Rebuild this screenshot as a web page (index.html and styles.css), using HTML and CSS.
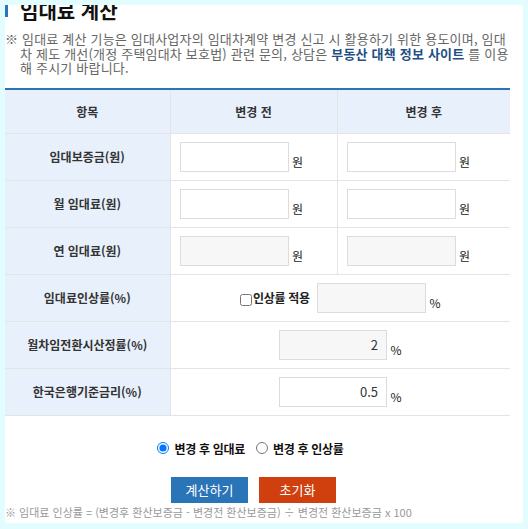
FILE: index.html
```html
<!DOCTYPE html>
<html lang="ko">
<head>
    <meta charset="UTF-8">
    <meta name="viewport" content="width=device-width, initial-scale=1.0">
    <title>임대료 계산</title>
    <link rel="stylesheet" href="styles.css">
</head>
<body>
    <div class="panel">
        <div class="content">
            <!-- 제목 -->
            <h3 class="page-title"><span class="title-bar"></span>임대료 계산</h3>
            <p class="notice">※ 임대료 계산 기능은 임대사업자의 임대차계약 변경 신고 시 활용하기 위한 용도이며, 임대차 제도 개선(개정 주택임대차 보호법) 관련 문의, 상담은 <a class="notice-link" href="#">부동산 대책 정보 사이트</a> 를 이용해 주시기 바랍니다.</p>

            <!-- 계산 표 -->
            <table class="calc-table">
                <colgroup>
                    <col class="col-label">
                    <col class="col-before">
                    <col class="col-after">
                </colgroup>
                <thead>
                    <tr>
                        <th>항목</th>
                        <th>변경 전</th>
                        <th>변경 후</th>
                    </tr>
                </thead>
                <tbody>
                    <tr>
                        <th>임대보증금(원)</th>
                        <td><input type="text" class="input-field"> <span class="unit">원</span></td>
                        <td><input type="text" class="input-field"> <span class="unit">원</span></td>
                    </tr>
                    <tr>
                        <th>월 임대료(원)</th>
                        <td><input type="text" class="input-field"> <span class="unit">원</span></td>
                        <td><input type="text" class="input-field"> <span class="unit">원</span></td>
                    </tr>
                    <tr>
                        <th>연 임대료(원)</th>
                        <td><input type="text" class="input-field" disabled> <span class="unit">원</span></td>
                        <td><input type="text" class="input-field" disabled> <span class="unit">원</span></td>
                    </tr>
                    <tr>
                        <th>임대료인상률(%)</th>
                        <td colspan="2" class="cell-center">
                            <label class="check-label"><input type="checkbox" class="check-box">인상률 적용</label>
                            <input type="text" class="input-field rate-field" disabled>
                            <span class="unit">%</span>
                        </td>
                    </tr>
                    <tr>
                        <th>월차임전환시산정률(%)</th>
                        <td colspan="2" class="cell-center">
                            <input type="text" class="input-field num-field" value="2" disabled>
                            <span class="unit">%</span>
                        </td>
                    </tr>
                    <tr>
                        <th>한국은행기준금리(%)</th>
                        <td colspan="2" class="cell-center">
                            <input type="text" class="input-field num-field" value="0.5">
                            <span class="unit">%</span>
                        </td>
                    </tr>
                </tbody>
            </table>

            <!-- 계산 방식 -->
            <div class="radio-group">
                <label class="radio-label"><input type="radio" name="calcType" class="radio" checked>변경 후 임대료</label>
                <label class="radio-label"><input type="radio" name="calcType" class="radio">변경 후 인상률</label>
            </div>

            <div class="button-group">
                <button class="button button-calc">계산하기</button>
                <button class="button button-reset">초기화</button>
            </div>

            <p class="formula">※ 임대료 인상률 = (변경후 환산보증금 - 변경전 환산보증금) ÷ 변경전 환산보증금 x 100</p>
        </div>
    </div>
</body>
</html>
```

FILE: styles.css
```css
body {
    margin: 0;
    padding: 5px;
    background-color: #e2fdff;
    font-family: 'Noto Sans CJK KR', 'Noto Sans', sans-serif;
    color: #333;
}

.panel {
    width: 518px;
    height: 518px;
    background-color: #fff;
    overflow: hidden;
}

.content {
    width: 505px;
}

.page-title {
    display: flex;
    align-items: flex-start;
    margin: -6px 0 0 0;
    font-size: 20px;
    line-height: 24px;
    font-weight: bold;
    color: #111;
}

.title-bar {
    width: 3px;
    height: 18px;
    margin-right: 12px;
    background-color: #2a74b8;
}

.notice {
    margin: 9px -6px 0 0;
    padding-left: 15px;
    text-indent: -15px;
    font-size: 13px;
    letter-spacing: 0.2px;
    line-height: 14.5px;
    color: #666;
}

.notice-link {
    color: #1f4f86;
    font-weight: bold;
    text-decoration: none;
}

.calc-table {
    width: 505px;
    margin-top: 12px;
    border-collapse: collapse;
    table-layout: fixed;
    border-top: 2px solid #2a74b8;
    font-size: 12px;
}

.col-label {
    width: 165px;
}

.col-before {
    width: 167px;
}

.col-after {
    width: 173px;
}

.calc-table th,
.calc-table td {
    border: 1px solid #e4e4e4;
    height: 46px;
    padding: 0;
}

.calc-table tr > :first-child {
    border-left: none;
}

.calc-table tr > :last-child {
    border-right: none;
}

.calc-table thead th {
    height: 43px;
    background-color: #e8f0fc;
    font-weight: bold;
    color: #333;
}

.calc-table tbody th {
    background-color: #e8f0fc;
    font-weight: bold;
    color: #333;
}

.calc-table td {
    padding-left: 9px;
    white-space: nowrap;
}

.calc-table td.cell-center {
    padding-left: 0;
    text-align: center;
}

.input-field {
    box-sizing: border-box;
    width: 109px;
    height: 30px;
    border: 1px solid #dcdcdc;
    background-color: #fff;
    font-family: 'Noto Sans CJK KR', sans-serif;
    font-size: 13px;
    color: #333;
    vertical-align: middle;
    outline: none;
}

.input-field:disabled {
    background-color: #f7f7f7;
}

.num-field {
    width: 108px;
    text-align: right;
    padding-right: 8px;
}

.rate-field {
    margin-left: 4px;
}

.unit {
    display: inline-block;
    margin-top: 9px;
    vertical-align: middle;
    color: #222;
}

.check-label {
    vertical-align: middle;
    font-weight: bold;
    letter-spacing: -0.3px;
    color: #222;
}

.check-box {
    width: 12px;
    height: 12px;
    margin: 0 1px 0 0;
    vertical-align: -3px;
}

.radio-group {
    display: flex;
    justify-content: center;
    gap: 11px;
    margin-top: 24px;
    padding-right: 14px;
}

.radio-label {
    display: flex;
    align-items: center;
    font-size: 12px;
    letter-spacing: -0.3px;
    font-weight: bold;
    color: #111;
}

.radio {
    width: 12px;
    height: 12px;
    margin: 0 5px 0 0;
}

.button-group {
    display: flex;
    justify-content: center;
    gap: 11px;
    margin-top: 20px;
    padding-right: 8px;
}

.button {
    width: 77px;
    height: 26px;
    border: none;
    color: #fff;
    font-family: 'Noto Sans CJK KR', sans-serif;
    font-size: 13px;
    cursor: pointer;
}

.button-calc {
    background-color: #2a74b8;
}

.button-reset {
    background-color: #d0400e;
}

.formula {
    margin: 2px 0 0 0;
    font-size: 11px;
    line-height: 15px;
    color: #999;
}
```
